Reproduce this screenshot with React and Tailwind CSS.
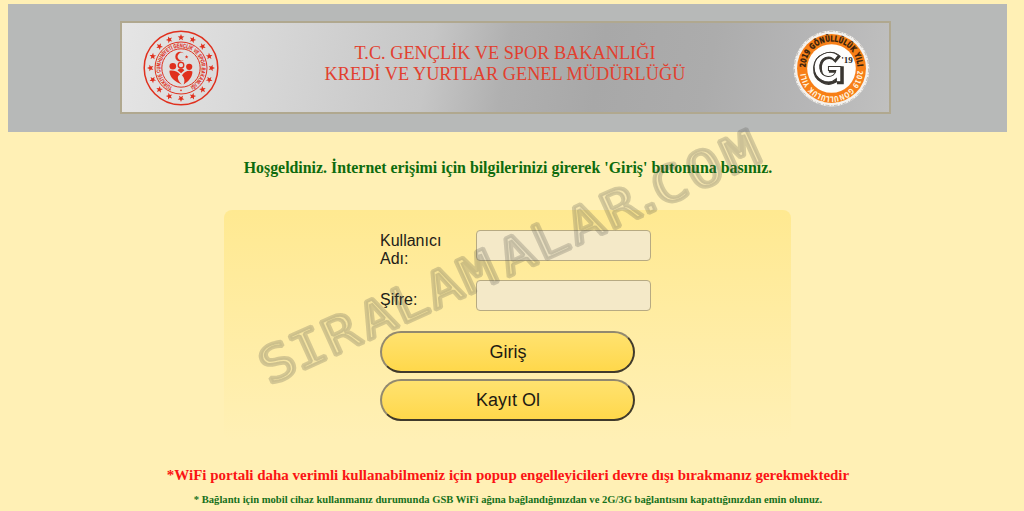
const STAR = "M0,-3.4 L0.9,-1.1 L3.3,-1 L1.4,0.5 L2.1,2.9 L0,1.5 L-2.1,2.9 L-1.4,0.5 L-3.3,-1 L-0.9,-1.1 Z";
const STAR_ANGLES = Array.from({ length: 16 }, (_, i) => i * 22.5);

function MinistryEmblem() {
  return (
    <svg viewBox="0 0 76 76" className="size-[76px] shrink-0" fill="#e0301e">
      <g fill="none" stroke="#e0301e">
        <circle cx="38" cy="38" r="36.8" strokeWidth="1.5" />
        <circle cx="38" cy="38" r="26" strokeWidth="1" />
        <circle cx="38" cy="38" r="19.2" strokeWidth="1" />
      </g>
      {STAR_ANGLES.map((a) => (
        <path key={a} d={STAR} transform={`rotate(${a} 38 38) translate(38 7.4)`} />
      ))}
      <path id="ministry-text" d="M29.5,56.8 A20.6,20.6 0 1 1 46.5,56.8" fill="none" />
      <text fontSize="5.6" fontWeight="700" stroke="#e0301e" strokeWidth=".15" className="font-['Liberation_Sans']">
        <textPath href="#ministry-text" textLength="110" lengthAdjust="spacingAndGlyphs">
          TÜRKİYE CUMHURİYETİ GENÇLİK VE SPOR BAKANLIĞI
        </textPath>
      </text>
      <circle cx="38" cy="60.4" r="0.8" />
      <path d="M41,23.6 A4.9,4.9 0 1 0 41,29.8 A3.9,3.9 0 1 1 41,23.6 Z" />
      <path d={STAR} transform="translate(43.6 26.8) scale(.55)" />
      <circle cx="29.8" cy="36.3" r="3.3" />
      <circle cx="46.2" cy="36.8" r="3.1" />
      <circle cx="38" cy="35.2" r="2.8" fill="none" stroke="#e0301e" strokeWidth="1.3" />
      <path d="M26.4,40.8 C30,39.8 34.6,41.4 37.1,44.6 C33.8,46 34,50 38.8,54.6 C31.5,51.5 26.5,47.3 26.4,40.8 Z" />
      <path d="M49.4,41.4 C45.8,39.5 41,41.6 39,45.2 C41.8,48 42,51 40.6,54.4 C46.2,50.8 49.5,46.6 49.4,41.4 Z" />
      <path d="M34.5,40.2 C36.2,38 39.8,38 41.4,40.2 L38.1,43.3 Z" />
    </svg>
  );
}

function VolunteerBadge() {
  return (
    <svg viewBox="0 0 76 76" className="size-[77px] shrink-0">
      <circle cx="38" cy="38" r="37.4" fill="#f3f1ee" />
      <circle cx="38" cy="38" r="36.6" fill="none" stroke="#9c9790" strokeWidth="0.6" strokeDasharray="4 1.5 1 2" />
      <circle cx="38" cy="38" r="34" fill="#f77f17" />
      <circle cx="38" cy="38" r="24" fill="#fdfdfc" />
      <path id="badge-top" d="M12.4,37 A25.6,25.6 0 0 1 63.6,37" fill="none" />
      <path id="badge-bottom" d="M63.6,40 A25.6,25.6 0 0 1 12.4,40" fill="none" />
      <g fontWeight="700" className="font-['DejaVu_Sans']">
        <text fontSize="8" fill="#33200e" stroke="#33200e" strokeWidth=".3">
          <textPath href="#badge-top" textLength="79" lengthAdjust="spacingAndGlyphs">2019 GÖNÜLLÜLÜK YILI</textPath>
        </text>
        <text fontSize="7.6" fill="#fff3df">
          <textPath href="#badge-bottom" textLength="77" lengthAdjust="spacingAndGlyphs">2019 GÖNÜLLÜLÜK YILI</textPath>
        </text>
      </g>
      <path
        d="M46.5,26 C38,18 21.5,24 20.5,37 C19.5,51 35,58 44,50 V53 H49.5 V36.5 H36 V41.5 H42.5 C42,49 29,49 28,39 C27,28 37,25 41.8,31.5 Z"
        fill="#393631"
        stroke="#393631"
        strokeWidth="1.2"
      />
      <path
        d="M44.7,25 C37,18.5 21.5,24 20.8,36 C20.4,49 35,55.5 42.8,48 V51 H47.2 V36 H35 V40 H42.3 C41.5,48.3 27.5,48 26.5,38 C25.5,27 36.5,23.5 41,30 Z"
        fill="#fff"
        stroke="#393631"
        strokeWidth="1"
      />
      <text x="47.6" y="33" fontSize="9" fontWeight="700" fill="#2b2824" className="font-['Liberation_Serif']">
        '19
      </text>
    </svg>
  );
}

function Banner() {
  return (
    <header className="flex h-32 w-[999px] bg-[#b7b9b8] pt-[17px] pl-28">
      <div className="flex h-[93px] w-[771px] items-start justify-between border-2 border-[#b0a88f] bg-[linear-gradient(100deg,#e5e5e5_0%,#dadada_15%,#cecece_30%,#c6c6c6_40%,#b0b0b0_50%,#a8a8a8_62%,#acacac_76%,#b8b8b9_92%,#c0c0bf_100%)] pt-[7px] pr-[19px] pl-[21px]">
        <MinistryEmblem />
        <div className="mt-[13px] mr-0.5 w-[400px] text-center font-['Liberation_Serif',serif] text-[18.3px] leading-[21px] whitespace-nowrap text-[#e2402f]">
          <p>T.C. GENÇLİK VE SPOR BAKANLIĞI</p>
          <p>KREDİ VE YURTLAR GENEL MÜDÜRLÜĞÜ</p>
        </div>
        <VolunteerBadge />
      </div>
    </header>
  );
}

function Field({ id, label, type }) {
  return (
    <div className="flex">
      <label htmlFor={id} className="flex h-[38px] w-24 items-center pt-0.5 pr-8 text-base leading-[18px]">
        {label}
      </label>
      <input
        id={id}
        type={type}
        className="h-[31px] w-[175px] rounded-[4px] border border-[#b7aa82] bg-[#f4e9c8] px-2 outline-none"
      />
    </div>
  );
}

function PillButton({ children }) {
  return (
    <button
      type="button"
      className="h-[42px] w-[255px] rounded-full border-2 border-t-[#92896f] border-r-[#403a2b] border-b-[#403a2b] border-l-[#92896f] bg-linear-to-b from-[#ffe26f] to-[#ffd84a] pl-px text-lg text-[#1d1a12]"
    >
      {children}
    </button>
  );
}

function Watermark() {
  return (
    <svg className="pointer-events-none absolute inset-0 h-[511px] w-[1024px]" viewBox="0 0 1024 511">
      <text
        transform="translate(270 385) rotate(-24.4) scale(1.16 1)"
        x="-1 28 59 93 124 156 188 225 257 290 323 347 370 403 437"
        fontSize="50"
        fill="#55554d"
        fillOpacity=".06"
        stroke="#55554d"
        strokeOpacity=".25"
        strokeWidth="3.6"
        strokeLinejoin="bevel"
        className="font-['DejaVu_Sans_Mono',monospace]"
      >
        SIRALAMALAR.COM
      </text>
    </svg>
  );
}

export default function App() {
  return (
    <div className="relative h-[511px] w-[1024px] overflow-hidden bg-[#fff0b5] pt-1 pl-2">
      <Banner />
      <div className="flex w-[999px] flex-col items-center font-['Liberation_Serif',serif] font-bold">
        <h1 className="mt-[25px] h-[53px] pl-px text-[15.88px] leading-[22px] whitespace-nowrap text-[#0d6b0d]">
          Hoşgeldiniz. İnternet erişimi için bilgilerinizi girerek 'Giriş' butonuna basınız.
        </h1>
        <form className="h-[230px] w-[567px] rounded-lg bg-linear-to-b from-[#ffe991] to-[#fff0b5] pt-5 pl-[156px] font-['Liberation_Sans',sans-serif] font-normal text-[#222018]">
          <div className="flex h-[101px] flex-col gap-3">
            <Field id="username" label="Kullanıcı Adı:" type="text" />
            <Field id="password" label="Şifre:" type="password" />
          </div>
          <div className="flex flex-col gap-1.5">
            <PillButton>Giriş</PillButton>
            <PillButton>Kayıt Ol</PillButton>
          </div>
        </form>
        <p className="mt-[25px] pl-px text-[14.97px] leading-5 whitespace-nowrap text-[#fb1414]">
          *WiFi portali daha verimli kullanabilmeniz için popup engelleyicileri devre dışı bırakmanız gerekmektedir
        </p>
        <p className="mt-[9px] pl-px text-[10.58px] leading-3 whitespace-nowrap text-[#16701b]">
          * Bağlantı için mobil cihaz kullanmanız durumunda GSB WiFi ağına bağlandığınızdan ve 2G/3G bağlantısını kapattığınızdan emin olunuz.
        </p>
      </div>
      <Watermark />
    </div>
  );
}
